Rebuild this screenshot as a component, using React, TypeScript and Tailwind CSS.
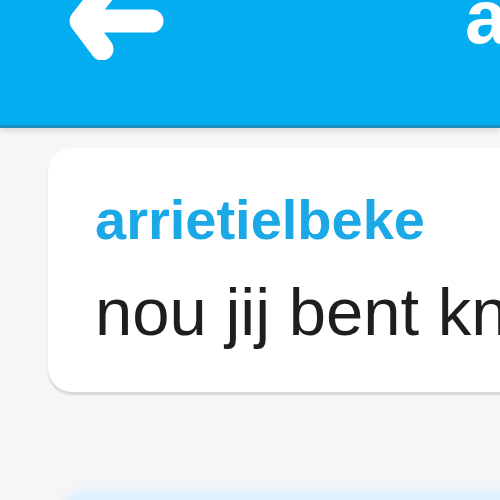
import React from "react";

function BackArrow() {
  return (
    <svg
      width="110"
      height="100"
      viewBox="60 -40 110 100"
      className="ml-[60px] -mt-[40px] shrink-0"
      aria-hidden
    >
      <path
        d="M152 21 H82 M104 -8 L81 21 L102 49"
        fill="none"
        stroke="#ffffff"
        strokeWidth="23"
        strokeLinecap="round"
        strokeLinejoin="round"
      />
    </svg>
  );
}

export default function App() {
  return (
    <div className="relative w-[500px] h-[500px] overflow-hidden bg-[#f6f6f6] font-['Liberation_Sans',Arial,sans-serif]">
      <header className="relative z-10 flex items-start h-[128px] bg-[#04adef] border-b-[3px] border-[#1d8fc2] shadow-[0_3px_6px_rgba(0,0,0,0.12)] overflow-hidden">
        <BackArrow />
        <span className="ml-[295px] -mt-[21px] text-[76px] font-bold leading-none text-white whitespace-nowrap">
          arrietielbeke
        </span>
      </header>

      <div className="ml-[48px] mt-[20px] w-[520px] h-[244px] rounded-[24px] bg-white shadow-[0_3px_2px_rgba(0,0,0,0.13)] pt-[44px] pl-[47px]">
        <div className="text-[56px] font-bold leading-none text-[#1aa8e6] whitespace-nowrap">
          arrietielbeke
        </div>
        <div className="mt-[30px] text-[67px] leading-none text-[#1e1e1e] whitespace-nowrap">
          nou jij bent knap
        </div>
      </div>

      <div className="ml-[60px] mt-[100px] w-[500px] h-[60px] rounded-tl-[24px] bg-[#e1f0fd] shadow-[0_-6px_10px_rgba(225,240,253,0.6)]" />
    </div>
  );
}
